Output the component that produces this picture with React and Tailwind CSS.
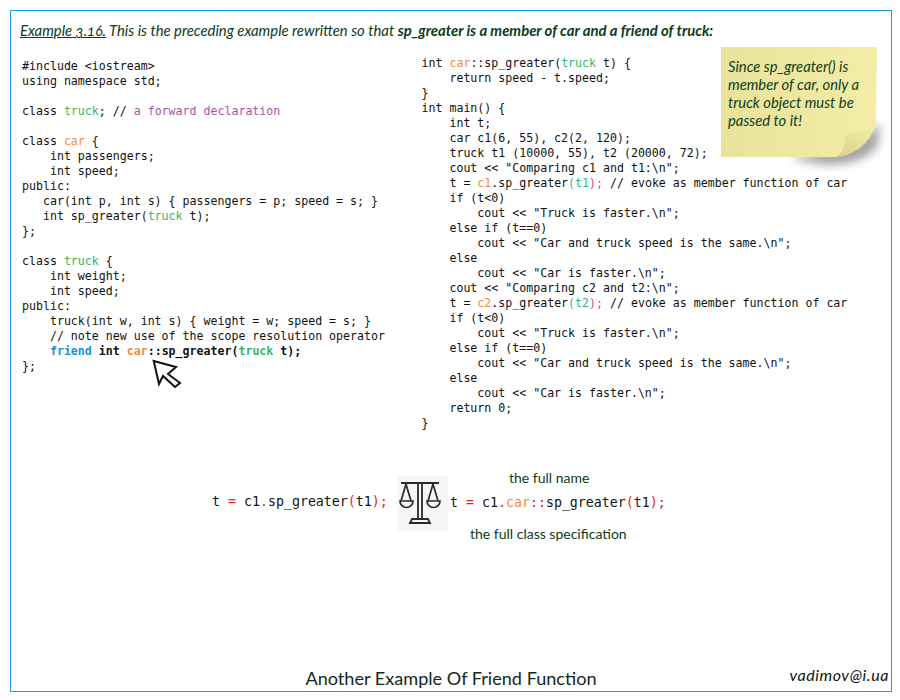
const code = "font-['DejaVu_Sans_Mono',monospace] whitespace-pre text-[#111]";
const sans = "font-['Lato','Noto_Sans',sans-serif]";

const Car = ({ children = "car" }) => <span className="text-[#f58a3c]">{children}</span>;
const Truck = ({ children = "truck" }) => <span className="text-[#36b56c]">{children}</span>;
const Red = ({ children }) => <span className="text-[#e8202a]">{children}</span>;

const L = ({ children }) => <div className="h-[15px]">{children}</div>;

const Call = ({ obj, arg }) => (
  <>
    t = <Car>{obj}</Car>.sp_greater<Truck>(t{arg}</Truck>
    <span className="text-[#e8408c]">);</span>
    {" // evoke as member function of car"}
  </>
);

const ScalesIcon = () => (
  <svg width="50" height="55" viewBox="0 0 50 55" className="bg-[#f6f6f6] shrink-0 mt-[7px]" fill="none" stroke="#2b2b2b" strokeWidth="1.7">
    <path d="M3 7H41" strokeWidth="2" />
    <path d="M20 8V43M24 8V43" strokeWidth="1.8" />
    <path d="M8 8L3 25M8 8L13 25M35 8L30 25M35 8L40 25" />
    <path d="M2 25H15A6.5 6.5 0 0 1 2 25Z" />
    <path d="M29 25H42A6.5 6.5 0 0 1 29 25Z" />
    <path d="M12 47L14 43H30L32 47Z" strokeWidth="1.8" />
  </svg>
);

const StickyNote = () => (
  <div className={`absolute left-[710px] top-[36px] w-[156px] h-[110px] ${sans} italic text-[14.8px] leading-[18px] text-[#0d4020] pl-[7px] pt-[10px]`}>
    <svg width="190" height="140" viewBox="0 0 190 140" className="absolute left-0 top-0">
      <defs>
        <linearGradient id="paper" x1="0" y1="0" x2="1" y2="0">
          <stop offset="0" stopColor="#e9e29a" />
          <stop offset="1" stopColor="#f4eda8" />
        </linearGradient>
        <linearGradient id="flap" x1="1" y1="0" x2="0" y2="1">
          <stop offset="0" stopColor="#f6f0ae" />
          <stop offset="1" stopColor="#d9d186" />
        </linearGradient>
        <filter id="blur" x="-40%" y="-40%" width="180%" height="180%">
          <feGaussianBlur stdDeviation="5" />
        </filter>
      </defs>
      <path d="M70 110C100 122 140 120 156 100L160 76L140 92L110 104Z" fill="#555" opacity="0.55" filter="url(#blur)" />
      <path d="M0 0H156L155 76C150 84 135 85 124 88C125 98 122 106 116 110H0Z" fill="url(#paper)" />
      <path d="M155 76C150 84 135 85 124 88C125 98 122 106 116 110C135 108 150 95 155 76Z" fill="url(#flap)" />
    </svg>
    <p className="relative">
      Since sp_greater() is
      <br />
      member of car, only a
      <br />
      truck object must be
      <br />
      passed to it!
    </p>
  </div>
);

const Cursor = () => (
  <svg width="32" height="32" viewBox="0 0 32 32" className="absolute left-[140px] top-[348px]" fill="#fff" stroke="#111" strokeWidth="2" strokeLinejoin="miter">
    <path d="M2.7 2L25 8L17 15L29 24L24 28L12 17L8 25Z" />
  </svg>
);

export default function App() {
  return (
    <div className="bg-white w-[900px] h-[700px] pt-[10px] pl-[10px]">
      <div className="relative flex flex-col w-[882px] h-[682px] border border-[#1ba1e2]">
        <h1 className={`${sans} italic text-[14.85px] leading-[18px] text-[#0d3a1c] ml-[9px] mt-[10px] oldstyle-nums`}>
          <span className="underline">Example 3.16.</span> This is the preceding example rewritten so that{" "}
          <b>sp_greater is a member of car and a friend of truck:</b>
        </h1>

        <div className={`flex mt-[7px] h-[388px] ${code} text-[11.6px] leading-[15px]`}>
          {/* left column */}
          <div className="ml-[11px] mt-[13px] w-[399.5px]">
            <L>{"#include <iostream>"}</L>
            <L>using namespace std;</L>
            <L />
            <L>
              class <Truck />; // <span className="text-[#a653a8]">a forward declaration</span>
            </L>
            <L />
            <L>
              class <Car /> {"{"}
            </L>
            <L>{"    int passengers;"}</L>
            <L>{"    int speed;"}</L>
            <L>public:</L>
            <L>{"   car(int p, int s) { passengers = p; speed = s; }"}</L>
            <L>
              {"   int sp_greater("}
              <Truck /> t);
            </L>
            <L>{"};"}</L>
            <L />
            <L>
              class <Truck /> {"{"}
            </L>
            <L>{"    int weight;"}</L>
            <L>{"    int speed;"}</L>
            <L>public:</L>
            <L>{"    truck(int w, int s) { weight = w; speed = s; }"}</L>
            <L>{"    // note new use of the scope resolution operator"}</L>
            <L>
              <span className="font-bold">
                {"    "}
                <span className="text-[#1d8fd8]">friend</span> int <Car />::sp_greater(<Truck /> t);
              </span>
            </L>
            <L>{"};"}</L>
          </div>

          {/* right column */}
          <div className="mt-[10px]">
            <L>
              int <Car />::sp_greater(<Truck /> t) {"{"}
            </L>
            <L>{"    return speed - t.speed;"}</L>
            <L>{"}"}</L>
            <L>{"int main() {"}</L>
            <L>{"    int t;"}</L>
            <L>{"    car c1(6, 55), c2(2, 120);"}</L>
            <L>{"    truck t1 (10000, 55), t2 (20000, 72);"}</L>
            <L>{'    cout << "Comparing c1 and t1:\\n";'}</L>
            <L>
              {"    "}
              <Call obj="c1" arg="1" />
            </L>
            <L>{"    if (t<0)"}</L>
            <L>{'        cout << "Truck is faster.\\n";'}</L>
            <L>{"    else if (t==0)"}</L>
            <L>{'        cout << "Car and truck speed is the same.\\n";'}</L>
            <L>{"    else"}</L>
            <L>{'        cout << "Car is faster.\\n";'}</L>
            <L>{'    cout << "Comparing c2 and t2:\\n";'}</L>
            <L>
              {"    "}
              <Call obj="c2" arg="2" />
            </L>
            <L>{"    if (t<0)"}</L>
            <L>{'        cout << "Truck is faster.\\n";'}</L>
            <L>{"    else if (t==0)"}</L>
            <L>{'        cout << "Car and truck speed is the same.\\n";'}</L>
            <L>{"    else"}</L>
            <L>{'        cout << "Car is faster.\\n";'}</L>
            <L>{"    return 0;"}</L>
            <L>{"}"}</L>
          </div>
        </div>

        <div className="flex items-start ml-[201px] mt-[35px]">
          <span className={`${code} text-[13.28px] leading-[20px] mt-[23px] w-[186px]`}>
            t <Red>=</Red> c1<Red>.</Red>sp_greater<Red>(</Red>t1<Red>);</Red>
          </span>
          <ScalesIcon />
          <div className={`flex flex-col ml-[2px] text-[#0d3a1c] ${sans} text-[14px]`}>
            <span className="pl-[59px] leading-[18px]">the full name</span>
            <span className={`${code} text-[13.28px] leading-[20px] mt-[6px] mb-[12px]`}>
              t <Red>=</Red> c1<Red>.</Red>
              <Car />
              <Red>::</Red>sp_greater<Red>(</Red>t1<Red>);</Red>
            </span>
            <span className="pl-[20px] leading-[18px]">the full class specification</span>
          </div>
        </div>

        <div className="flex-1" />
        <div className={`relative flex items-end justify-center h-[26px] pb-[1px] ${sans}`}>
          <span className="text-[18.1px] leading-[24px] text-[#14281a]">Another Example Of Friend Function</span>
          <span className="absolute right-[2px] bottom-[6px] italic text-[16px] tracking-[0.6px] leading-[20px] text-[#111]">vadimov@i.ua</span>
        </div>

        <StickyNote />
        <Cursor />
      </div>
    </div>
  );
}
